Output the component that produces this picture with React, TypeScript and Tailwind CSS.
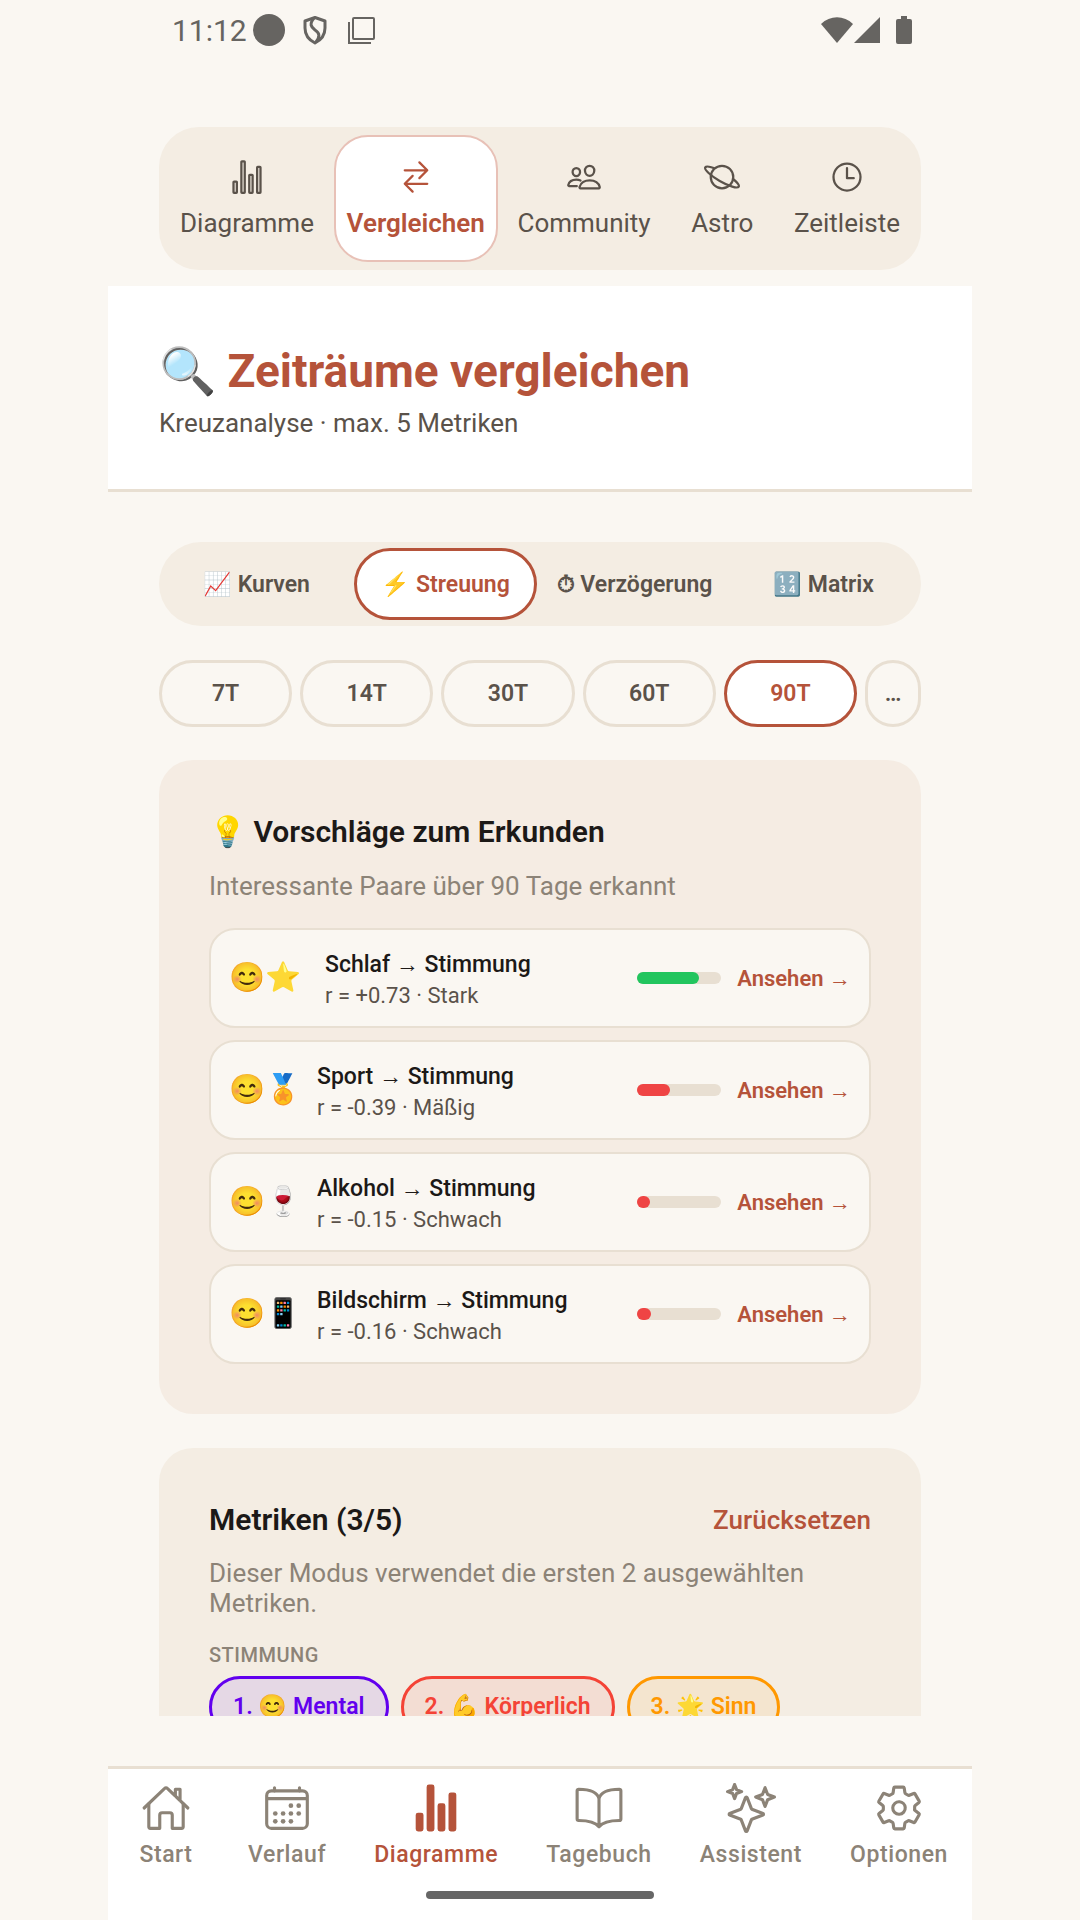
import type { IconType } from 'react-icons';
import {
  IoBookOutline,
  IoCalendarOutline,
  IoHomeOutline,
  IoPeopleOutline,
  IoPlanetOutline,
  IoSettingsOutline,
  IoSparklesOutline,
  IoStatsChart,
  IoStatsChartOutline,
  IoSwapHorizontalOutline,
  IoTimeOutline,
} from 'react-icons/io5';

const sections: { icon: IconType; label: string; active?: boolean }[] = [
  { icon: IoStatsChartOutline, label: 'Diagramme' },
  { icon: IoSwapHorizontalOutline, label: 'Vergleichen', active: true },
  { icon: IoPeopleOutline, label: 'Community' },
  { icon: IoPlanetOutline, label: 'Astro' },
  { icon: IoTimeOutline, label: 'Zeitleiste' },
];

const modes = [
  { label: '📈 Kurven' },
  { label: '⚡ Streuung', active: true },
  { label: '⏱\uFE0E Verzögerung' },
  { label: '🔢 Matrix' },
];

const periods = ['7T', '14T', '30T', '60T', '90T'];

const suggestions = [
  { emoji: '😊⭐', wide: true, from: 'Schlaf', r: '+0.73', strength: 'Stark', value: 73, color: 'bg-[#22c55e]' },
  { emoji: '😊🏅', from: 'Sport', r: '-0.39', strength: 'Mäßig', value: 39, color: 'bg-[#ef4444]' },
  { emoji: '😊🍷', from: 'Alkohol', r: '-0.15', strength: 'Schwach', value: 15, color: 'bg-[#ef4444]' },
  { emoji: '😊📱', from: 'Bildschirm', r: '-0.16', strength: 'Schwach', value: 16, color: 'bg-[#ef4444]' },
];

const metrics = [
  { label: '1. 😊 Mental', style: 'border-[#6200ee] bg-[#e5d8e5] text-[#6200ee]' },
  { label: '2. 💪 Körperlich', style: 'border-[#f44336] bg-[#f3ddd3] text-[#f44336]' },
  { label: '3. 🌟 Sinn', style: 'border-[#ff9800] bg-[#f4e5cf] text-[#ff9800]' },
];

const tabs: { icon: IconType; label: string; active?: boolean }[] = [
  { icon: IoHomeOutline, label: 'Start' },
  { icon: IoCalendarOutline, label: 'Verlauf' },
  { icon: IoStatsChart, label: 'Diagramme', active: true },
  { icon: IoBookOutline, label: 'Tagebuch' },
  { icon: IoSparklesOutline, label: 'Assistent' },
  { icon: IoSettingsOutline, label: 'Optionen' },
];

function StatusBar() {
  return (
    <div className="flex h-[60px] shrink-0 items-center justify-between pr-[59px] pl-16 text-[#666461]">
      <div className="flex items-center">
        <span className="text-[30px]">11:12</span>
        <span className="ml-1.5 h-8 w-8 rounded-full bg-[#666461]" />
        <svg className="ml-[14px] h-8 w-8" viewBox="0 0 32 32" fill="none" stroke="currentColor" strokeWidth="3">
          <path d="M16 3.5 L26 7 V14 C26 21 22 26 16 29 C10 26 6 21 6 14 V7 Z" strokeLinejoin="round" />
          <path d="M15 4 C10 10 12 13 16 16 C21 19 21 23 17 28" />
        </svg>
        <svg className="ml-[14px] h-8 w-8" viewBox="0 0 32 32" fill="none" stroke="currentColor" strokeWidth="2">
          <rect x="8" y="4" width="21" height="21" rx="1" />
          <path d="M4 8 V29 H26" />
        </svg>
      </div>
      <div className="flex items-center">
        <svg className="h-7 w-8" viewBox="0 0 32 28" fill="currentColor">
          <path d="M16 27 L0 8 C9 -1 23 -1 32 8 Z" />
        </svg>
        <svg className="h-7 w-7" viewBox="0 0 28 28" fill="currentColor">
          <path d="M27 1 V27 H1 Z" />
        </svg>
        <svg className="ml-[14px] h-7 w-[18px]" viewBox="0 0 18 28" fill="currentColor">
          <path d="M6 0 H12 V3 H15 Q17 3 17 5 V26 Q17 28 15 28 H3 Q1 28 1 26 V5 Q1 3 3 3 H6 Z" />
        </svg>
      </div>
    </div>
  );
}

export default function App() {
  return (
    <div className="flex h-screen flex-col overflow-hidden bg-[#faf7f2] px-[10%] font-[Roboto,'Noto_Sans',sans-serif] text-[#5a524a]">
      <StatusBar />

      {/* Section switcher */}
      <nav className="mx-[51px] mt-[67px] flex shrink-0 justify-between rounded-[40px] bg-[#f4ede3] p-2">
        {sections.map(({ icon: Icon, label, active }) => (
          <button
            key={label}
            className={`flex h-[127px] min-w-[104px] flex-col items-center justify-center gap-3 rounded-[34px] border-2 px-[11px] text-[26px] leading-8 ${
              active ? 'border-[#e8c1b7] bg-white font-semibold text-[#b5533a]' : 'border-transparent'
            }`}
          >
            <Icon size={36} />
            {label}
          </button>
        ))}
      </nav>

      <header className="mt-4 shrink-0 border-b-3 border-[#e8dfd2] bg-white px-[51px] pt-[55px] pb-12">
        <h1 className="text-[46px] leading-[60px] font-bold text-[#b5533a]">🔍 Zeiträume vergleichen</h1>
        <p className="mt-1 text-[26px] leading-9">Kreuzanalyse · max. 5 Metriken</p>
      </header>

      <main className="flex min-h-0 flex-1 flex-col overflow-hidden px-[51px] pt-[50px]">
        <div className="flex shrink-0 gap-1.5 rounded-[42px] bg-[#f4ede3] p-[6px]">
          {modes.map(({ label, active }) => (
            <button
              key={label}
              className={`h-[72px] flex-1 rounded-[36px] border-3 pt-0.5 text-[23px] font-semibold whitespace-nowrap ${
                active ? 'border-[#b5533a] bg-white text-[#b5533a]' : 'border-transparent'
              }`}
            >
              {label}
            </button>
          ))}
        </div>

        <div className="mt-[34px] flex shrink-0 gap-2">
          {periods.map((period) => (
            <button
              key={period}
              className={`h-[67px] flex-1 rounded-[34px] border-3 pt-0.5 text-[23px] font-semibold ${
                period === '90T' ? 'border-[#b5533a] bg-white text-[#b5533a]' : 'border-[#e8dfd2]'
              }`}
            >
              {period}
            </button>
          ))}
          <button className="h-[67px] w-14 rounded-[34px] border-3 border-[#e8dfd2] pt-0.5 text-[23px] font-semibold">
            …
          </button>
        </div>

        <section className="mt-[33px] shrink-0 rounded-[34px] bg-[#f5ece3] p-[50px]">
          <h2 className="text-[30px] leading-11 font-semibold text-[#1c1917]">💡 Vorschläge zum Erkunden</h2>
          <p className="mt-[14px] text-[26px] leading-9 text-[#8c8377]">Interessante Paare über 90 Tage erkannt</p>
          <ul className="mt-6 flex flex-col gap-3">
            {suggestions.map((item) => (
              <li
                key={item.from}
                className="flex h-[100px] items-center rounded-[26px] border-2 border-[#e8dfd2] bg-[#faf7f2] px-[18px]"
              >
                <span className={`text-[29px] ${item.wide ? 'pr-2' : ''}`}>{item.emoji}</span>
                <div className="ml-4 flex-1 pt-1">
                  <h3 className="text-[23px] leading-8 font-medium text-[#1c1917]">{item.from} → Stimmung</h3>
                  <p className="text-[22px] leading-[30px]">
                    r = {item.r} · {item.strength}
                  </p>
                </div>
                <div className="h-3 w-[84px] rounded-full bg-[#e8dfd2]">
                  <div className={`h-3 rounded-full ${item.color}`} style={{ width: `${item.value}%` }} />
                </div>
                <a href="#" className="ml-4 text-[22px] font-semibold text-[#b5533a]">
                  Ansehen →
                </a>
              </li>
            ))}
          </ul>
        </section>

        <section className="mt-[34px] shrink-0 rounded-[34px] bg-[#f4ede3] p-[50px]">
          <div className="flex items-center justify-between">
            <h2 className="text-[30px] leading-11 font-semibold text-[#1c1917]">Metriken (3/5)</h2>
            <button className="text-[26px] font-medium text-[#b5533a]">Zurücksetzen</button>
          </div>
          <p className="mt-4 text-[26px] leading-[30px] text-[#8c8377]">
            Dieser Modus verwendet die ersten 2 ausgewählten Metriken.
          </p>
          <h3 className="mt-6 text-[20px] leading-[26px] font-medium tracking-wide text-[#8c8377] uppercase">
            Stimmung
          </h3>
          <div className="mt-2 flex gap-3">
            {metrics.map(({ label, style }) => (
              <button key={label} className={`h-[62px] rounded-[31px] border-3 px-[21px] text-[23px] font-semibold ${style}`}>
                {label}
              </button>
            ))}
          </div>
        </section>
      </main>

      <footer className="mt-[50px] shrink-0 border-t-3 border-[#e8dfd2] bg-white px-6 pt-[14px]">
        <nav className="flex justify-between">
          {tabs.map(({ icon: Icon, label, active }) => (
            <a
              key={label}
              href="#"
              className={`flex min-w-[68px] flex-col items-center gap-1.5 text-[23px] leading-8 font-medium tracking-wide ${
                active ? 'text-[#b5533a]' : 'text-[#8c8377]'
              }`}
            >
              <Icon size={50} />
              {label}
            </a>
          ))}
        </nav>
        <div className="mx-auto mt-5 mb-[21px] h-2 w-[228px] rounded-full bg-[#666666]" />
      </footer>
    </div>
  );
}
